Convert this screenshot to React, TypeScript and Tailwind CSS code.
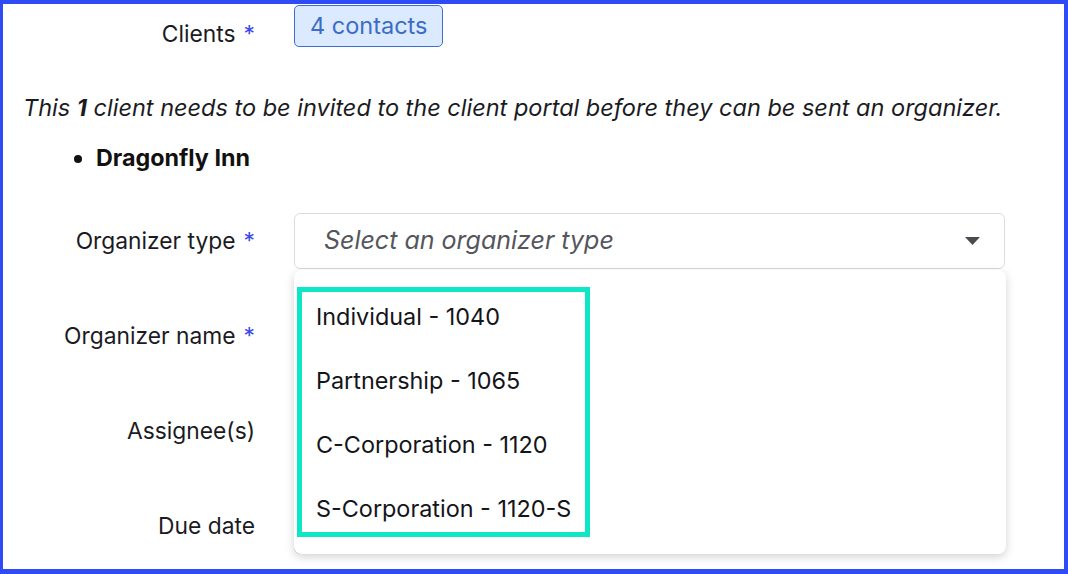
import React from "react";

const Label = ({ text, req }: { text: string; req?: boolean }) => (
  <div className="text-right text-[22.8px] text-[#1b1b1f] leading-none">
    {text}
    {req && <span className="text-[#3b49f0] ml-[8px]">*</span>}
  </div>
);

export default function App() {
  const options = [
    "Individual - 1040",
    "Partnership - 1065",
    "C-Corporation - 1120",
    "S-Corporation - 1120-S",
  ];
  return (
    <div
      className="w-[1068px] h-[574px] bg-white border-[#2e4bf6] border-t-4 border-l-[3px] border-r-4 border-b-[5px] overflow-hidden"
      style={{ fontFamily: "Inter, 'Noto Sans', sans-serif" }}
    >
      <div className="flex flex-col">
        {/* Clients */}
        <div className="grid grid-cols-[252px_1fr] gap-x-[39px] items-start">
          <div className="pt-[19px]">
            <Label text="Clients" req />
          </div>
          <div className="pt-[1px]">
            <span className="inline-flex items-center h-[42px] px-[15px] rounded-[5px] border border-[#3b6fd4] bg-[#dbeafe] text-[#3a6cc8] text-[23.5px]">
              4 contacts
            </span>
          </div>
        </div>

        {/* paragraph */}
        <p className="mt-[46px] ml-[20px] text-[23.5px] italic text-[#1b1b1f] leading-[30px]">
          This <b>1</b> client needs to be invited to the client portal before they can be sent an organizer.
        </p>
        <ul className="mt-[20px] ml-[71px] list-disc text-[23.3px] font-bold text-[#111] leading-[30px] pl-[22px]">
          <li>Dragonfly Inn</li>
        </ul>

        {/* Form rows */}
        <div className="mt-[40px] grid grid-cols-[252px_711px] gap-x-[39px] gap-y-[39px]">
          <div className="h-[56px] flex items-center justify-end">
            <Label text="Organizer type" req />
          </div>
          <div className="relative">
            <div className="h-[56px] rounded-[6px] border border-[#dcdcdc] flex items-center pl-[29px] pr-[24px]">
              <span className="flex-1 italic text-[25px] text-[#55565c]">Select an organizer type</span>
              <svg width="15" height="8" viewBox="0 0 15 8">
                <path d="M0 0 L15 0 L7.5 8 Z" fill="#4a4b50" />
              </svg>
            </div>
            {/* Dropdown menu overlay */}
            <div className="absolute left-0 top-[57px] w-[712px] h-[284px] bg-white rounded-[8px] shadow-[0_3px_10px_rgba(0,0,0,0.18)] z-10 pt-[17px] pl-[3px]">
              <div className="w-[293px] border-[5px] border-[#0fe6c6] flex flex-col pl-[14px] pt-[5px] pb-[3px]">
                {options.map((o, i) => (
                  <div
                    key={o}
                    className={`h-[40px] flex items-center text-[23.4px] text-[#14151a] ${i > 0 ? "mt-[24px]" : ""}`}
                  >
                    {o}
                  </div>
                ))}
              </div>
            </div>
          </div>

          <div className="h-[56px] flex items-center justify-end">
            <Label text="Organizer name" req />
          </div>
          <div className="h-[56px] rounded-[6px] border border-[#dcdcdc]" />

          <div className="h-[56px] flex items-center justify-end">
            <Label text="Assignee(s)" />
          </div>
          <div className="h-[56px] rounded-[6px] border border-[#dcdcdc]" />

          <div className="h-[56px] flex items-center justify-end">
            <Label text="Due date" />
          </div>
          <div className="h-[56px] w-[212px] rounded-[6px] border border-[#dcdcdc]" />
        </div>
      </div>
    </div>
  );
}
